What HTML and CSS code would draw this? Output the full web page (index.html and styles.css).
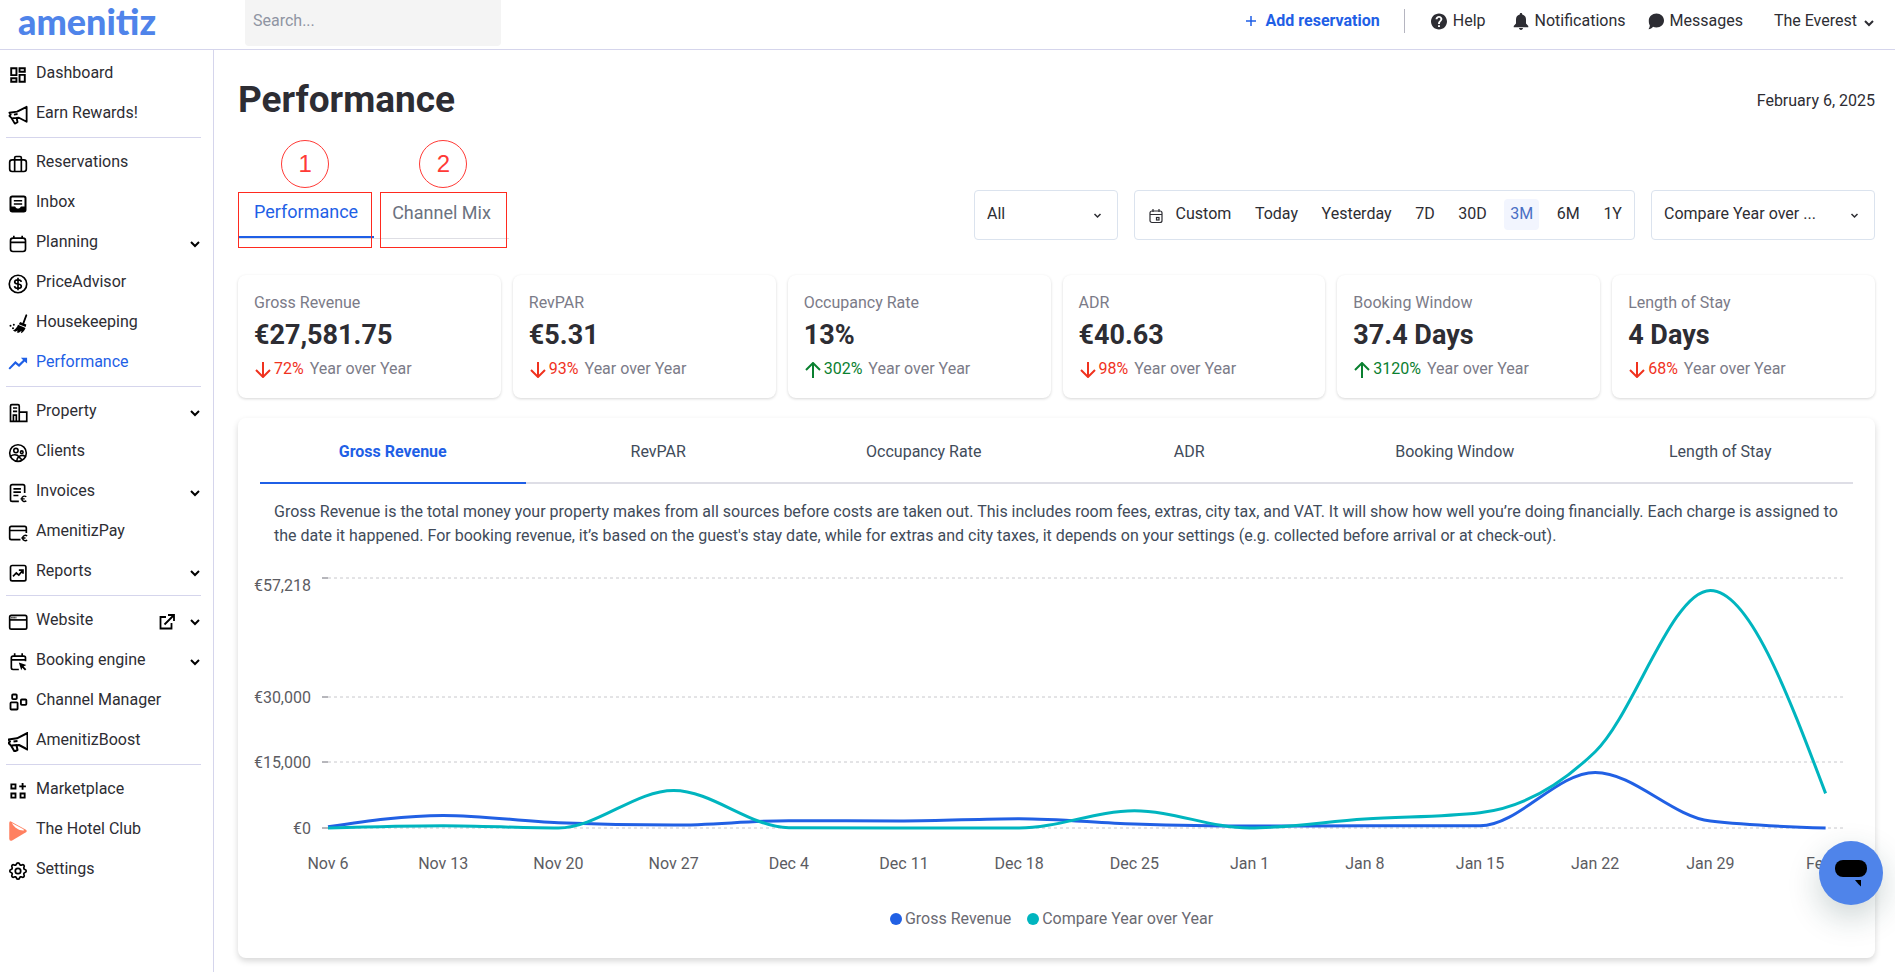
FILE: index.html
```html
<!DOCTYPE html>
<html lang="en">
<head>
<meta charset="utf-8">
<title>Performance</title>
<meta name="viewport" content="width=device-width, initial-scale=1">
<link rel="stylesheet" href="styles.css">
</head>
<body>
<svg class="sprite" aria-hidden="true">
  <symbol id="chevron" viewBox="0 0 12 12"><path d="M2 4l4 4 4-4" fill="none" stroke="currentColor" stroke-width="2"/></symbol>
  <symbol id="megaphone" viewBox="1 1 22 22"><path d="M2.500 9.500L11 8.300 21.500 3v16.500L13 15l-2.500.3 1 4.700-3 1.500-3.500-6L2.500 13l1.500-1.500z M6 15.500l5-.4M7.500 11.500l4-.6" fill="none" stroke="currentColor" stroke-width="2" stroke-linejoin="round"/></symbol>
  <symbol id="down" viewBox="0 0 16 16"><path d="M8 0v15M1 8l7 7 7-7" fill="none" stroke="currentColor" stroke-width="2"/></symbol>
  <symbol id="up" viewBox="0 0 16 16"><path d="M8 16V1M1 8l7-7 7 7" fill="none" stroke="currentColor" stroke-width="2"/></symbol>
</svg>

<header class="topbar">
  <a class="logo" href="#">amenitiz</a>
  <input class="search" type="search" placeholder="Search..." aria-label="Search">
  <nav class="top-links" aria-label="Account">
    <a class="add" href="#"><svg class="plus" viewBox="0 0 10 10"><path d="M5 0v10M0 5h10" fill="none" stroke="currentColor" stroke-width="1.500"/></svg>Add reservation</a>
    <span class="rule"></span>
    <a class="top-link" href="#"><svg class="top-icon" viewBox="2 2 20 20"><path fill="currentColor" d="M12 2C6.480 2 2 6.480 2 12s4.480 10 10 10 10-4.480 10-10S17.520 2 12 2zm1.200 17h-2.400v-2.400h2.400zm1.900-7.750l-.9.92C13.450 12.900 13.200 13.500 13.200 15h-2.400v-.5c0-1.100.45-2.100 1.170-2.830l1.240-1.260c.37-.36.59-.86.59-1.410 0-1-.8-1.700-1.800-1.700s-1.900.8-1.900 1.900H7.700C7.700 6.700 9.700 5 12 5s4.200 1.700 4.200 4c0 .88-.5 1.680-1.100 2.250z"/></svg>Help</a>
    <a class="top-link bell" href="#"><svg class="top-icon" viewBox="0 0 16 18"><path fill="currentColor" d="M8 0c.8 0 1.300.5 1.300 1.200v.5C12 2.300 13.300 4.400 13.300 7v4l2.400 2.800V15H.3v-1.200L2.700 11V7C2.700 4.400 4 2.300 6.700 1.700v-.5C6.700.5 7.200 0 8 0zM5.900 16h4.200c0 1.200-.9 2-2.100 2s-2.100-.8-2.100-2z"/></svg>Notifications</a>
    <a class="top-link" href="#"><svg class="top-icon" viewBox="0 0 16 16"><path fill="currentColor" d="M8.500 0C12.700 0 16 3 16 7s-3.300 7-7.500 7c-1.300 0-2.500-.3-3.500-.8C4 14.600 2.300 15.700.5 15.700c.8-1.100 1.400-2.600 1.300-4C.9 10.400.8 8.700.8 7 .8 3 4.300 0 8.500 0z"/></svg>Messages</a>
    <button class="account" type="button">The Everest<svg class="chev" viewBox="0 0 12 12"><use href="#chevron"/></svg></button>
  </nav>
</header>

<div class="shell">
<nav class="sidebar" aria-label="Main">
  <ul class="group">
    <li><a class="item" href="#"><svg class="icon" viewBox="0 0 24 24"><path fill="currentColor" d="M19 5v2h-4V5h4M9 5v6H5V5h4m10 8v6h-4v-6h4M9 17v2H5v-2h4M21.300 2.700h-8.600v6.600h8.600V2.700zM11.300 2.700H2.700v10.600h8.600V2.700zm10 8h-8.600v10.600h8.600V10.700zm-10 4H2.700v6.600h8.600v-6.600z"/></svg><span>Dashboard</span></a></li>
    <li><a class="item" href="#"><svg class="icon"><use href="#megaphone"/></svg><span>Earn Rewards!</span></a></li>
  </ul>
  <ul class="group">
    <li><a class="item" href="#"><svg class="icon" viewBox="0 0 24 24"><g fill="none" stroke="currentColor" stroke-width="2"><rect x="2" y="7" width="20" height="14" rx="3"/><path d="M8 21V4.500Q8 3 9.500 3h5Q16 3 16 4.500V21"/></g></svg><span>Reservations</span></a></li>
    <li><a class="item" href="#"><svg class="icon" viewBox="0 0 24 24"><rect x="3" y="3" width="18" height="18" rx="2" fill="none" stroke="currentColor" stroke-width="2.400"/><path d="M7 8h10M7 12h10" stroke="currentColor" stroke-width="1.800"/><path d="M3 15h5.500c.6 1.500 2 2.500 3.500 2.500s2.900-1 3.500-2.500H21v6H3z" fill="currentColor"/></svg><span>Inbox</span></a></li>
    <li><a class="item" href="#"><svg class="icon" viewBox="0 0 24 24"><g fill="none" stroke="currentColor" stroke-width="2"><rect x="3" y="5" width="18" height="16" rx="3"/><path d="M3 10h18M7 2v4M17 2v4"/></g></svg><span>Planning</span><svg class="chev"><use href="#chevron"/></svg></a></li>
    <li><a class="item" href="#"><svg class="icon" viewBox="0 0 24 24"><g fill="none" stroke="currentColor" stroke-width="2"><circle cx="12" cy="12" r="10.500"/><path d="M16 9.500C15.700 8 14.200 7 12 7S8 8 8 9.500s1.300 2.100 4 2.500 4 1 4 2.700-1.700 2.500-4 2.500-4-1.200-4.200-2.700M12 4.500v15"/></g></svg><span>PriceAdvisor</span></a></li>
    <li><a class="item" href="#"><svg class="icon" viewBox="0 0 24 24"><path d="M22 1.500L18.500 11" stroke="currentColor" stroke-width="2.200" stroke-linecap="round"/><path d="M14.500 9.500l7.500 3-.8 3-8.200-3.300zM12 13l9 3.800c-1 3-3 5.500-5.500 6.200l.7-2.800L13 22.500l-2.500-.3 1.300-2.400-3.300 1.400-2.500-1.300C9 18.500 11 16 12 13z" fill="currentColor"/><circle cx="3" cy="14" r="1.200"/><circle cx="7" cy="13" r="1.200"/><circle cx="6" cy="17" r="1.200"/></svg><span>Housekeeping</span></a></li>
    <li><a class="item current" href="#" aria-current="page"><svg class="icon" viewBox="0 0 24 24"><path fill="currentColor" d="M15.500 4.500l2.600 2.600-5 5-4.300-3.600L.6 17l1.700 1.700L9 12l4.300 3.600 6.600-6.700 3 2.600v-7z"/></svg><span>Performance</span></a></li>
  </ul>
  <ul class="group">
    <li><a class="item" href="#"><svg class="icon" viewBox="0 0 24 24"><g fill="none" stroke="currentColor" stroke-width="2"><path d="M3 22V3.500Q3 2 4.500 2H12q1.500 0 1.500 1.500V22M2 22h20.500V11h-9M6 6h5M6 10h5M6.500 22v-7.500H10V22"/></g></svg><span>Property</span><svg class="chev"><use href="#chevron"/></svg></a></li>
    <li><a class="item" href="#"><svg class="icon" viewBox="0 0 24 24"><g fill="none" stroke="currentColor" stroke-width="1.900"><circle cx="12" cy="12" r="10"/><circle cx="9.500" cy="9" r="2.600"/><circle cx="16.500" cy="11" r="1.600"/><path d="M3 16c3-2.500 8-2.500 10 .5 1.500-1.500 5-2 8-.5M13 16.500c-1.500 1-2.500 3-2.500 5.500M13 16.500l4 4"/></g></svg><span>Clients</span></a></li>
    <li><a class="item" href="#"><svg class="icon" viewBox="0 0 24 24"><g fill="none" stroke="currentColor" stroke-width="2"><path d="M20 12V4q0-2-2-2H5Q3 2 3 4v16q0 2 2 2h8M6.500 7h9M6.500 11h9M6.500 15h6"/><path d="M22 16.500c-2.300-1.600-5.500-.4-5.500 2.500s3.200 4.100 5.500 2.500M15 19h5" stroke-width="1.700"/></g></svg><span>Invoices</span><svg class="chev"><use href="#chevron"/></svg></a></li>
    <li><a class="item" href="#"><svg class="icon" viewBox="0 0 24 24"><g fill="none" stroke="currentColor" stroke-width="2"><path d="M22 12V6q0-2-2-2H4Q2 4 2 6v12q0 2 2 2h11M2 9h20"/><path d="M23 15.500c-2.300-1.600-5.500-.4-5.500 2.500s3.200 4.100 5.500 2.500M16 18h5" stroke-width="1.700"/></g></svg><span>AmenitizPay</span></a></li>
    <li><a class="item" href="#"><svg class="icon" viewBox="0 0 24 24"><g fill="none" stroke="currentColor" stroke-width="2"><rect x="3" y="3" width="18.500" height="18.500" rx="2"/><path d="M6 16l4-4 3 2.500 4.500-5.500M13 8.500h5V13"/></g></svg><span>Reports</span><svg class="chev"><use href="#chevron"/></svg></a></li>
  </ul>
  <ul class="group">
    <li><a class="item" href="#"><svg class="icon" viewBox="0 0 24 24"><g fill="none" stroke="currentColor" stroke-width="2"><rect x="2" y="4" width="20.500" height="16.500" rx="2"/><path d="M2 9.500h20.500"/><path d="M4 6.700h6" stroke-dasharray="1.500 1"/></g></svg><span>Website</span><svg class="external" viewBox="0 0 16 16"><path d="M7 3H1.500v11.500H12.500V9M9 1h6v6M15 1L5.500 10.500" fill="none" stroke="currentColor" stroke-width="1.800"/></svg><svg class="chev"><use href="#chevron"/></svg></a></li>
    <li><a class="item" href="#"><svg class="icon" viewBox="0 0 24 24"><g fill="none" stroke="currentColor" stroke-width="2"><path d="M21 11V7q0-2-2-2H6Q4 5 4 7v12q0 2 2 2h7M4 9.500h17M8 1.500V5M17 1.500V5"/></g><path d="M13 12.500l9 3.200-3.300 1.600 3.300 3.300-1.600 1.600-3.300-3.300-1.200 2.900z" fill="currentColor"/></svg><span>Booking engine</span><svg class="chev"><use href="#chevron"/></svg></a></li>
    <li><a class="item" href="#"><svg class="icon" viewBox="0 0 24 24"><g fill="none" stroke="currentColor" stroke-width="2.200"><rect x="5" y="3" width="5.500" height="5.500" rx="1"/><rect x="3" y="12.500" width="8.500" height="8.500" rx="1"/><rect x="15.500" y="9" width="6.500" height="6.500" rx="1"/></g></svg><span>Channel Manager</span></a></li>
    <li><a class="item" href="#"><svg class="icon" viewBox="1 1 20 20"><use href="#megaphone" width="22" height="22"/></svg><span>AmenitizBoost</span></a></li>
  </ul>
  <ul class="group">
    <li><a class="item" href="#"><svg class="icon" viewBox="0 0 24 24"><path d="M4 4h5v5H4zM4 15h5v5H4zM15 15h5v5h-5zM17.500 2.500v8M13.500 6.500h8" fill="none" stroke="currentColor" stroke-width="2.200"/></svg><span>Marketplace</span></a></li>
    <li><a class="item" href="#"><svg class="icon" viewBox="0 0 24 24"><path d="M3.500 0.500L21.500 10.500q2 1.500 0 3L5.500 23q-4 2-4-2V2.500q0-2.500 2-2z" fill="#ff8060"/><path d="M4.500 2.500C7.500 7.500 12.500 11.500 18 11.500c2-.3 1-1.300 0-2z" fill="#fff"/></svg><span>The Hotel Club</span></a></li>
    <li><a class="item" href="#"><svg class="icon" viewBox="1 1 22 22"><path d="M10.325 4.317c.426-1.756 2.924-1.756 3.350 0a1.724 1.724 0 002.573 1.066c1.543-.94 3.310.826 2.370 2.370a1.724 1.724 0 001.065 2.572c1.756.426 1.756 2.924 0 3.350a1.724 1.724 0 00-1.066 2.573c.94 1.543-.826 3.310-2.370 2.370a1.724 1.724 0 00-2.572 1.065c-.426 1.756-2.924 1.756-3.350 0a1.724 1.724 0 00-2.573-1.066c-1.543.94-3.310-.826-2.370-2.370a1.724 1.724 0 00-1.065-2.572c-1.756-.426-1.756-2.924 0-3.350a1.724 1.724 0 001.066-2.573c-.94-1.543.826-3.310 2.370-2.370.996.608 2.296.07 2.572-1.065z" fill="none" stroke="currentColor" stroke-width="1.900"/><circle cx="12" cy="12" r="3" fill="none" stroke="currentColor" stroke-width="1.900"/></svg><span>Settings</span></a></li>
  </ul>
</nav>

<main class="main">
  <div class="title-row">
    <h1 class="title">Performance</h1>
    <time class="date" datetime="2025-02-06">February 6, 2025</time>
  </div>

  <div class="controls">
    <div class="page-tabs">
      <div class="page-tab-slot"><button class="page-tab active" type="button">Performance</button><span class="frame"><span class="marker">1</span></span></div>
      <div class="page-tab-slot"><button class="page-tab" type="button">Channel Mix</button><span class="frame"><span class="marker">2</span></span></div>
    </div>
    <div class="filters">
      <div class="select all"><select aria-label="Filter"><option>All</option></select><svg class="chev small"><use href="#chevron"/></svg></div>
      <div class="range">
        <svg class="calendar" viewBox="0 0 16 16"><g fill="none" stroke="currentColor" stroke-width="1.200"><rect x="2" y="3" width="12" height="11.500" rx="2"/><path d="M2 6.500h12M5 1v3M11 1v3"/><rect x="8.500" y="9.500" width="2.500" height="2.500"/></g></svg>
        <button class="range-btn first" type="button">Custom</button>
        <button class="range-btn" type="button">Today</button>
        <button class="range-btn" type="button">Yesterday</button>
        <button class="range-btn" type="button">7D</button>
        <button class="range-btn" type="button">30D</button>
        <button class="range-btn selected" type="button">3M</button>
        <button class="range-btn" type="button">6M</button>
        <button class="range-btn" type="button">1Y</button>
      </div>
      <div class="select compare"><select aria-label="Compare"><option>Compare Year over ...</option></select><svg class="chev small"><use href="#chevron"/></svg></div>
    </div>
  </div>

  <section class="cards">
    <article class="card"><h2 class="label">Gross Revenue</h2><p class="value">€27,581.75</p><p class="change"><span class="delta loss"><svg class="arrow"><use href="#down"/></svg>72%</span> Year over Year</p></article>
    <article class="card"><h2 class="label">RevPAR</h2><p class="value">€5.31</p><p class="change"><span class="delta loss"><svg class="arrow"><use href="#down"/></svg>93%</span> Year over Year</p></article>
    <article class="card"><h2 class="label">Occupancy Rate</h2><p class="value">13%</p><p class="change"><span class="delta gain"><svg class="arrow"><use href="#up"/></svg>302%</span> Year over Year</p></article>
    <article class="card"><h2 class="label">ADR</h2><p class="value">€40.63</p><p class="change"><span class="delta loss"><svg class="arrow"><use href="#down"/></svg>98%</span> Year over Year</p></article>
    <article class="card"><h2 class="label">Booking Window</h2><p class="value">37.4 Days</p><p class="change"><span class="delta gain"><svg class="arrow"><use href="#up"/></svg>3120%</span> Year over Year</p></article>
    <article class="card"><h2 class="label">Length of Stay</h2><p class="value">4 Days</p><p class="change"><span class="delta loss"><svg class="arrow"><use href="#down"/></svg>68%</span> Year over Year</p></article>
  </section>

  <section class="panel">
    <div class="metric-tabs">
      <button class="metric-tab active" type="button">Gross Revenue</button>
      <button class="metric-tab" type="button">RevPAR</button>
      <button class="metric-tab" type="button">Occupancy Rate</button>
      <button class="metric-tab" type="button">ADR</button>
      <button class="metric-tab" type="button">Booking Window</button>
      <button class="metric-tab" type="button">Length of Stay</button>
    </div>
    <p class="description">Gross Revenue is the total money your property makes from all sources before costs are taken out. This includes room fees, extras, city tax, and VAT. It will show how well you’re doing financially. Each charge is assigned to the date it happened. For booking revenue, it’s based on the guest's stay date, while for extras and city taxes, it depends on your settings (e.g. collected before arrival or at check-out).</p>
    <svg class="chart" id="chart" viewBox="0 0 1637 330" role="img" aria-label="Gross revenue by week"></svg>
    <div class="legend">
      <span class="key"><i class="dot revenue"></i>Gross Revenue</span>
      <span class="key"><i class="dot compare-dot"></i>Compare Year over Year</span>
    </div>
  </section>
</main>
</div>

<button class="chat" type="button" aria-label="Open chat"><svg class="chat-icon" viewBox="0 0 32 28"><rect x="0" y="1" width="32" height="17" rx="8"/><path d="M20 21h6v6.500q-3-2.500-6-6.500z"/></svg></button>
<script src="chart.js"></script>
</body>
</html>
```
FILE: styles.css
```css
* { box-sizing: border-box; }
body {
  margin: 0;
  min-height: 100vh;
  display: flex;
  flex-direction: column;
  background: #fff;
  color: #2d2d33;
  font: 16px/24px Roboto, "Liberation Sans", sans-serif;
}
h1, h2, p, ul { margin: 0; padding: 0; }
ul { list-style: none; }
a { color: inherit; text-decoration: none; }
button, select, input { font: inherit; color: inherit; }
button { border: 0; padding: 0; background: none; cursor: pointer; }
svg { flex: none; display: block; }
.sprite { position: absolute; width: 0; height: 0; }
.chev { width: 12px; height: 12px; }
.chev.small { width: 9px; height: 9px; }

.topbar {
  display: flex;
  height: 50px;
  padding: 0 20px 3px 18px;
  border-bottom: 1px solid #d5d5ec;
}
.logo {
  width: 227px;
  color: #4f84ea;
  font: 900 36px/42px Lato, sans-serif;
}
.search {
  width: 256px;
  border: 0;
  border-radius: 0 0 4px 4px;
  padding: 0 8px 4px;
  background: #f4f4f4;
}
.search::placeholder { color: #8f95a3; opacity: 1; }
.top-links {
  display: flex;
  align-items: center;
  height: 42px;
  margin-left: auto;
}
.add {
  display: flex;
  align-items: center;
  gap: 10px;
  color: #1f5fe6;
  font-weight: 700;
}
.plus { width: 10px; height: 10px; }
.rule { width: 1px; height: 24px; margin: 0 26px 0 24px; background: #b5b5c0; }
.top-link { display: flex; align-items: center; gap: 6px; margin-right: 27px; }
.top-link.bell { margin-right: 22px; }
.top-icon { width: 16px; height: 17px; }
.account { display: flex; align-items: center; gap: 6px; margin-left: 4px; }
.account .chev { margin-top: 4px; }

.shell { flex: 1; display: flex; }
.sidebar {
  flex: none;
  width: 214px;
  padding: 3px 12px 0 6px;
  border-right: 1px solid #d5d5ec;
}
.group + .group { margin-top: 4px; padding-top: 4px; border-top: 1px solid #d5d5ec; }
.item {
  display: flex;
  align-items: center;
  gap: 8px;
  height: 40px;
  padding: 0 0 1px 2px;
}
.item span { flex: 1; white-space: nowrap; }
.item .icon, .item .chev, .item .external { margin-top: 4px; color: #000; }
.icon { width: 20px; height: 20px; }
.item .external { width: 16px; height: 16px; margin-right: 6px; }
.item.current, .item.current .icon { color: #1f5fe6; }

.main { flex: 1; min-width: 0; padding: 28px 20px 14px 24px; }
.title-row { display: flex; justify-content: space-between; align-items: center; }
.title { font-size: 37px; line-height: 44px; font-weight: 700; }
.date { padding-top: 2px; }
.controls { display: flex; justify-content: space-between; margin-top: 68px; }
.page-tabs { display: flex; height: 49px; border-bottom: 1px solid #dedee4; }
.page-tab-slot { position: relative; display: flex; }
.page-tab {
  padding: 0 16px 3px;
  border-bottom: 2px solid transparent;
  font-size: 18px;
  color: #6b7280;
}
.page-tab.active { color: #1f5fe6; border-color: #1f5fe6; }
.page-tab-slot + .page-tab-slot .page-tab { padding: 0 18px; }
.frame {
  position: absolute;
  top: 2px;
  bottom: -10px;
  left: 0;
  right: 2px;
  display: flex;
  justify-content: center;
  border: 1px solid #ff2a1f;
  pointer-events: none;
}
.page-tab-slot + .page-tab-slot .frame { left: 6px; }
.marker {
  position: absolute;
  top: -53px;
  width: 48px;
  height: 48px;
  border: 1px solid #ff3a36;
  border-radius: 50%;
  color: #ff3a36;
  font: 24px/46px "Liberation Sans", sans-serif;
  text-align: center;
}
.filters { display: flex; gap: 16px; height: 50px; }
.select { display: grid; align-items: center; }
.select select {
  grid-area: 1 / 1;
  width: 100%;
  height: 50px;
  appearance: none;
  border: 1px solid #dbe3ee;
  border-radius: 4px;
  padding: 0 12px 2px;
  background: #fff;
}
.select .chev { grid-area: 1 / 1; justify-self: end; margin-right: 16px; pointer-events: none; }
.all { width: 144px; }
.compare { width: 224px; }
.range {
  display: flex;
  align-items: center;
  justify-content: space-between;
  width: 501px;
  padding: 0 6px 2px 13px;
  border: 1px solid #dbe3ee;
  border-radius: 4px;
}
.calendar { width: 16px; height: 16px; margin-top: 4px; }
.range-btn { height: 31px; padding: 0 6px; border-radius: 4px; }
.range-btn.first { padding-left: 0; }
.range-btn.selected { background: #f2f5fe; color: #4a6fc4; }

.cards { display: grid; grid-template-columns: repeat(6, 1fr); gap: 12px; margin-top: 35px; }
.card { height: 123px; padding: 16px; border-radius: 8px; box-shadow: 0 1px 3px rgba(0, 0, 0, .16); }
.label { font-size: 16px; line-height: 24px; font-weight: 400; color: #7b7b88; }
.value { font-size: 27px; line-height: 40px; font-weight: 700; }
.change { display: flex; gap: 6px; margin-top: 2px; color: #7b7b88; }
.delta { display: flex; align-items: center; gap: 3px; }
.arrow { width: 16px; height: 16px; margin: 2px 0 0 1px; }
.loss { color: #f0321e; }
.gain { color: #0a8030; }

.panel { margin-top: 20px; padding-bottom: 26px; border-radius: 8px; box-shadow: 0 3px 6px rgba(0, 0, 0, .16); }
.metric-tabs { display: grid; grid-template-columns: repeat(6, 1fr); margin: 0 22px; }
.metric-tab { height: 66px; padding-top: 3px; border-bottom: 2px solid #dedee6; color: #414b5a; }
.metric-tab.active { color: #1f5fe6; font-weight: 700; border-color: #1f5fe6; }
.description { margin: 16px 36px 11px; color: #414b5a; }
.chart { width: 100%; height: auto; }
.chart text { font-size: 16px; fill: #5c5c62; }
.grid { stroke: #c8c8cc; stroke-dasharray: 3 3; }
.tick { stroke: #6e6e78; }
.line { fill: none; stroke-width: 3; }
.line-revenue { stroke: #2160e4; }
.line-compare { stroke: #00b5bf; }
.legend { display: flex; justify-content: center; gap: 16px; margin-top: 18px; padding: 0 10px 1px 0; color: #6a6a72; }
.key { display: flex; align-items: center; gap: 3px; }
.dot { width: 12px; height: 12px; border-radius: 50%; }
.revenue { background: #2160e4; }
.compare-dot { background: #00b5bf; }

.chat {
  position: fixed;
  right: 12px;
  bottom: 67px;
  width: 64px;
  height: 64px;
  display: grid;
  place-items: center;
  border-radius: 50%;
  background: #4f84ea;
  box-shadow: 0 12px 32px rgba(20, 60, 60, .22);
}
.chat-icon { width: 32px; height: 28px; }
```
FILE: chart.js
```js
const chart = document.getElementById('chart');
const NS = 'http://www.w3.org/2000/svg';
const labels = ['Nov 6', 'Nov 13', 'Nov 20', 'Nov 27', 'Dec 4', 'Dec 11', 'Dec 18', 'Dec 25',
  'Jan 1', 'Jan 8', 'Jan 15', 'Jan 22', 'Jan 29', 'Feb 5'];
const revenue = [300, 2880, 1210, 660, 1670, 1625, 2130, 900, 430, 520, 520, 12720, 1580, 0];
const compare = [0, 520, 0, 8600, 80, 0, 0, 3960, 0, 2040, 3500, 17460, 54380, 7920];
const max = 57218, left = 90, right = 1605, base = 269, height = 250, step = 115.2;
const x = i => left + i * step;
const y = v => base - v / max * height;

function add(tag, attrs, text) {
  const el = document.createElementNS(NS, tag);
  for (const key in attrs) el.setAttribute(key, attrs[key]);
  if (text) el.textContent = text;
  chart.append(el);
}

// Monotone cubic interpolation through the weekly points.
function curve(values) {
  const p = values.map((v, i) => [x(i), y(v)]);
  const slope = p.slice(1).map((q, i) => (q[1] - p[i][1]) / step);
  const t = p.map((q, i) => {
    if (i === 0 || i === p.length - 1) return null;
    const a = slope[i - 1], b = slope[i];
    return (Math.sign(a) + Math.sign(b)) * Math.min(Math.abs(a), Math.abs(b), Math.abs(a + b) / 4) || 0;
  });
  t[0] = (3 * slope[0] - t[1]) / 2;
  const n = p.length - 1;
  t[n] = (3 * slope[n - 1] - t[n - 1]) / 2;
  const d = step / 3;
  return p.reduce((path, q, i) => i === 0 ? `M${q}` :
    `${path}C${p[i - 1][0] + d},${p[i - 1][1] + d * t[i - 1]} ${q[0] - d},${q[1] - d * t[i]} ${q}`, '');
}

for (const v of [57218, 30000, 15000, 0]) {
  const gy = Math.round(y(v));
  add('line', { class: 'grid', x1: left, x2: right, y1: gy, y2: gy });
  add('line', { class: 'tick', x1: left - 6, x2: left, y1: gy, y2: gy });
  add('text', { x: left - 17, y: gy + (v === max ? 13 : 6), 'text-anchor': 'end' }, '€' + v.toLocaleString('en-US'));
}
labels.forEach((label, i) => add('text', { x: x(i), y: 310, 'text-anchor': 'middle' }, label));
add('path', { class: 'line line-revenue', d: curve(revenue) });
add('path', { class: 'line line-compare', d: curve(compare) });
```
